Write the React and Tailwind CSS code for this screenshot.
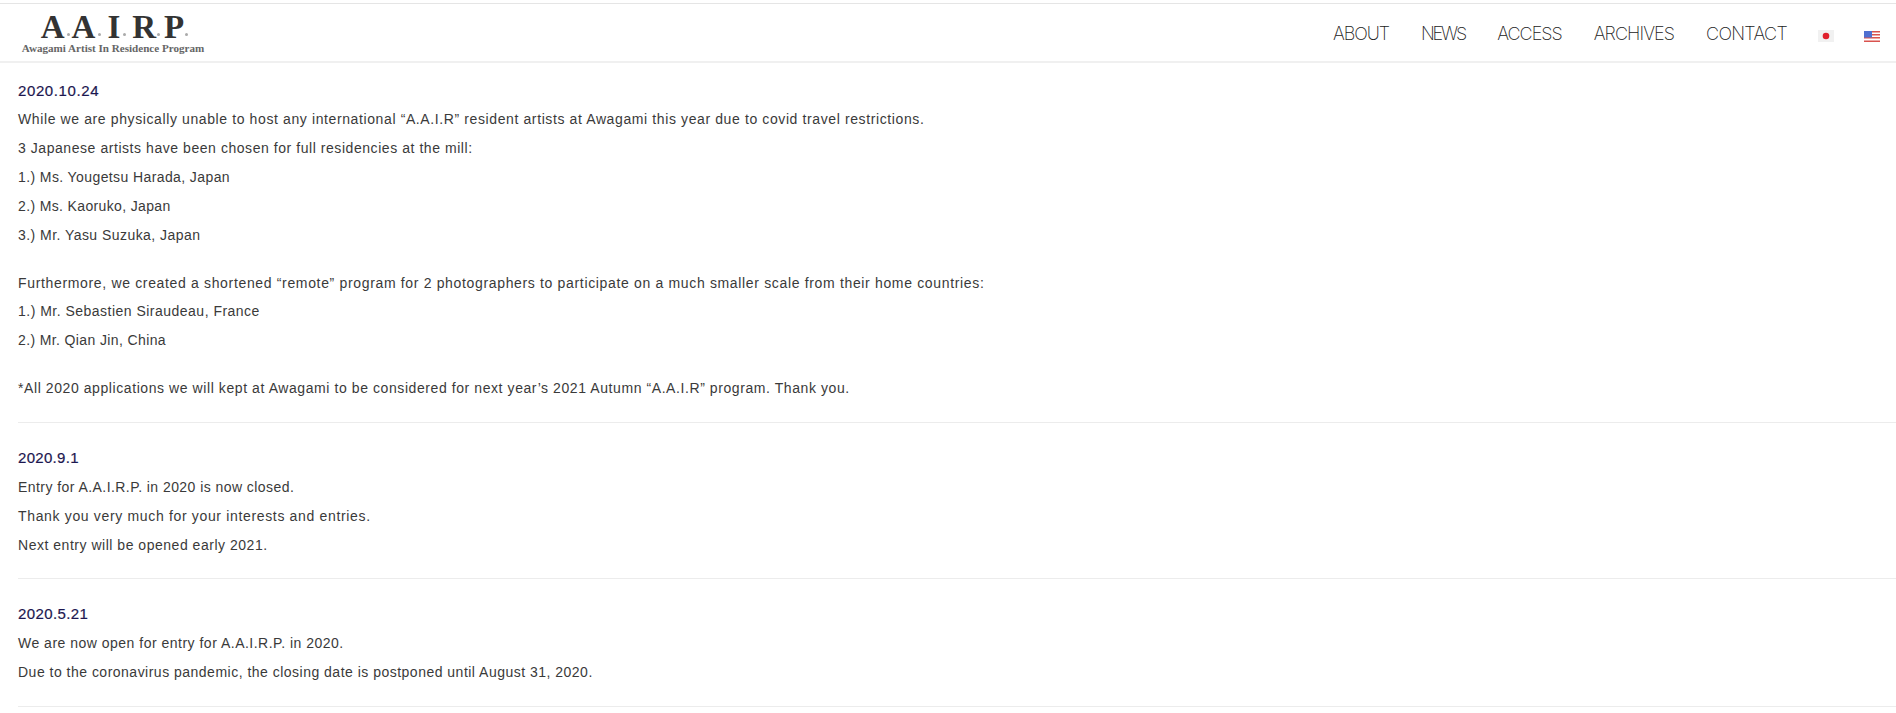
const Nav = ({ className, children }) => (
  <a className={"text-[18px] leading-6 text-[#222] font-extralight [font-family:Inter,sans-serif] " + className}>{children}</a>
);

const Dot = ({ className }) => <span className={"w-[3px] h-[3px] rounded-full bg-[#aaa] mb-[6px] " + className} />;

const Date_ = ({ className, children }) => (
  <h3 className={"text-[15px] leading-[29px] text-[#1c1750] [-webkit-text-stroke:0.2px_#1c1750] [font-family:'Liberation_Sans',sans-serif] " + className}>{children}</h3>
);

const L = ({ className, children }) => <p className={"leading-[29px] " + className}>{children}</p>;

export default function App() {
  return (
    <div className="bg-white h-[713px] overflow-hidden text-[#3a3a3a] text-[14px] [font-family:'Liberation_Sans',sans-serif]">
      <header className="mt-[3px] border-t border-[#e5e5e5] h-[60px] border-b-2 border-b-[#f0f0f0] flex items-center justify-between pl-[21px] pr-[16px]">
        <div className="flex flex-col items-center w-[184px] mt-[1px] [font-family:'Liberation_Serif',serif]">
          <div className="flex items-end text-[33px] leading-[29px] font-bold text-[#333] ml-[3px]">
            <span>A</span><Dot className="mx-[2px]" />
            <span>A</span><Dot className="ml-[3px] mr-[6px]" />
            <span>I</span><Dot className="ml-[3px] mr-[6px]" />
            <span>R</span><Dot className="ml-[1px] mr-[4px]" />
            <span>P</span><Dot className="ml-[1px]" />
          </div>
          <div className="text-[11.1px] leading-[12px] font-bold text-[#666] whitespace-nowrap">Awagami Artist In Residence Program</div>
        </div>
        <nav className="flex items-center mt-[3px]">
          <div className="flex gap-[32px]">
            <Nav className="tracking-[-1.1px]">ABOUT</Nav>
            <Nav className="tracking-[-2.1px]">NEWS</Nav>
            <Nav className="tracking-[-1px]">ACCESS</Nav>
            <Nav className="tracking-[-0.9px]">ARCHIVES</Nav>
            <Nav className="tracking-[-0.7px]">CONTACT</Nav>
          </div>
          <svg className="ml-[31px] mt-[4px]" width="16" height="12" viewBox="0 0 16 12">
            <rect width="16" height="12" fill="#f1f1f1" />
            <circle cx="8" cy="6" r="3.3" fill="#e0202c" />
          </svg>
          <svg className="ml-[30px] mt-[4px]" width="16" height="11" viewBox="0 0 16 11">
            <rect width="16" height="11" fill="#fff" />
            <rect y="0" width="16" height="1.5" fill="#d9534f" />
            <rect y="3" width="16" height="1.5" fill="#d9534f" />
            <rect y="6" width="16" height="1.5" fill="#d9534f" />
            <rect y="9.5" width="16" height="1.5" fill="#d9534f" />
            <rect width="8" height="6.5" fill="#4f6fd0" />
          </svg>
        </nav>
      </header>

      <main className="pt-[13px] pl-[18px]">
        <section className="border-b border-[#ececec] pb-[19px]">
          <Date_ className="tracking-[0.6px]">2020.10.24</Date_>
          <div className="mb-[19px]">
            <L className="tracking-[0.61px]">While we are physically unable to host any international “A.A.I.R” resident artists at Awagami this year due to covid travel restrictions.</L>
            <L className="tracking-[0.555px]">3 Japanese artists have been chosen for full residencies at the mill:</L>
            <L className="tracking-[0.4px]">1.) Ms. Yougetsu Harada, Japan</L>
            <L className="tracking-[0.36px]">2.) Ms. Kaoruko, Japan</L>
            <L className="tracking-[0.45px]">3.) Mr. Yasu Suzuka, Japan</L>
          </div>
          <div className="mb-[19px]">
            <L className="tracking-[0.66px] -mb-px">Furthermore, we created a shortened “remote” program for 2 photographers to participate on a much smaller scale from their home countries:</L>
            <L className="tracking-[0.485px]">1.) Mr. Sebastien Siraudeau, France</L>
            <L className="tracking-[0.38px]">2.) Mr. Qian Jin, China</L>
          </div>
          <L className="tracking-[0.58px]">*All 2020 applications we will kept at Awagami to be considered for next year’s 2021 Autumn “A.A.I.R” program. Thank you.</L>
        </section>
        <section className="border-b border-[#ececec] pt-[20px] pb-[18px]">
          <Date_ className="mb-px tracking-[0.3px]">2020.9.1</Date_>
          <L className="tracking-[0.44px]">Entry for A.A.I.R.P. in 2020 is now closed.</L>
          <L className="tracking-[0.66px]">Thank you very much for your interests and entries.</L>
          <L className="tracking-[0.52px]">Next entry will be opened early 2021.</L>
        </section>
        <section className="border-b border-[#ececec] pt-[20px] pb-[19px]">
          <Date_ className="mb-px tracking-[0.4px]">2020.5.21</Date_>
          <L className="tracking-[0.495px]">We are now open for entry for A.A.I.R.P. in 2020.</L>
          <L className="tracking-[0.49px]">Due to the coronavirus pandemic, the closing date is postponed until August 31, 2020.</L>
        </section>
      </main>
    </div>
  );
}
